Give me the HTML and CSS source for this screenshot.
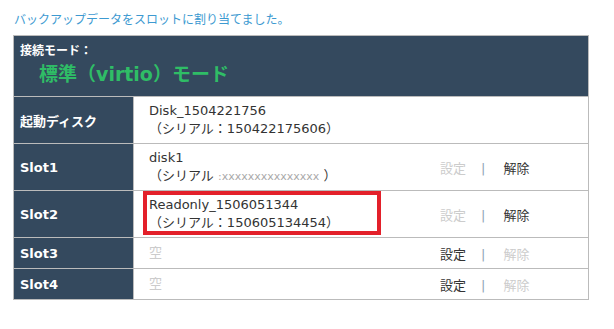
FILE: index.html
```html
<!DOCTYPE html>
<html lang="ja">
<head>
    <meta charset="UTF-8">
    <title>スロット割り当て</title>
    <link rel="stylesheet" href="styles.css">
</head>
<body>
    <p class="message">バックアップデータをスロットに割り当てました。</p>

    <table class="slot-table">
        <tr class="mode-row">
            <td colspan="3">
                <div class="mode-label">接続モード：</div>
                <div class="mode-value">標準（virtio）モード</div>
            </td>
        </tr>
        <tr class="tall">
            <th>起動ディスク</th>
            <td class="disk">Disk_1504221756<br>（シリアル：150422175606）</td>
            <td class="actions"></td>
        </tr>
        <tr class="tall">
            <th>Slot1</th>
            <td class="disk">disk1<br>（シリアル <span class="placeholder">:xxxxxxxxxxxxxxx</span> ）</td>
            <td class="actions"><span class="off">設定</span><span class="sep">|</span><span class="on">解除</span></td>
        </tr>
        <tr class="tall">
            <th>Slot2</th>
            <td class="disk marked">Readonly_1506051344<br>（シリアル：150605134454）<div class="highlight"></div></td>
            <td class="actions"><span class="off">設定</span><span class="sep">|</span><span class="on">解除</span></td>
        </tr>
        <tr class="short">
            <th>Slot3</th>
            <td class="disk empty">空</td>
            <td class="actions"><span class="on">設定</span><span class="sep">|</span><span class="off">解除</span></td>
        </tr>
        <tr class="short">
            <th>Slot4</th>
            <td class="disk empty">空</td>
            <td class="actions"><span class="on">設定</span><span class="sep">|</span><span class="off">解除</span></td>
        </tr>
    </table>
</body>
</html>
```

FILE: styles.css
```css
* {
    box-sizing: border-box;
    margin: 0;
    padding: 0;
}

body {
    margin: 0;
    padding: 12px 13px;
    background: #fff;
    font-family: "DejaVu Sans", "Noto Sans CJK JP", sans-serif;
    font-size: 13px;
    color: #333;
}

.message {
    font-size: 12px;
    color: #3d9ad1;
    height: 23px;
    line-height: 16px;
    padding-left: 1px;
}

.slot-table {
    width: 576px;
    border-collapse: collapse;
    border: 1px solid #bbb;
}

.slot-table th,
.slot-table td {
    border: 1px solid #bbb;
}

.mode-row td {
    background: #34495e;
    height: 61px;
    padding: 4px 6px 0;
    vertical-align: top;
}

.mode-label {
    color: #fff;
    font-weight: bold;
    font-size: 12px;
    line-height: 22px;
}

.mode-value {
    color: #2fbd66;
    font-weight: bold;
    font-size: 19px;
    line-height: 24px;
    padding-left: 19px;
}

.slot-table th {
    width: 120px;
    background: #34495e;
    color: #fff;
    font-size: 13px;
    text-align: left;
    padding-left: 6px;
}

.tall th,
.tall td {
    height: 47px;
}

.short th,
.short td {
    height: 31px;
}

.slot-table .disk {
    width: 250px;
    padding-left: 15px;
    line-height: 18px;
    vertical-align: middle;
    border-right: hidden;
}

.marked {
    position: relative;
}

.highlight {
    position: absolute;
    left: 9px;
    top: 0;
    width: 238px;
    height: 44px;
    border: 4px solid #e3202a;
}

.placeholder {
    font-size: 11px;
    color: #aaa;
}

.empty {
    color: #ccc;
}

.actions {
    text-align: center;
    vertical-align: middle;
    white-space: nowrap;
    padding-right: 2px;
}

.actions .sep {
    color: #8fa3b5;
    margin: 0 18px 0 15px;
}

.on {
    color: #333;
}

.off {
    color: #ccc;
}
```
